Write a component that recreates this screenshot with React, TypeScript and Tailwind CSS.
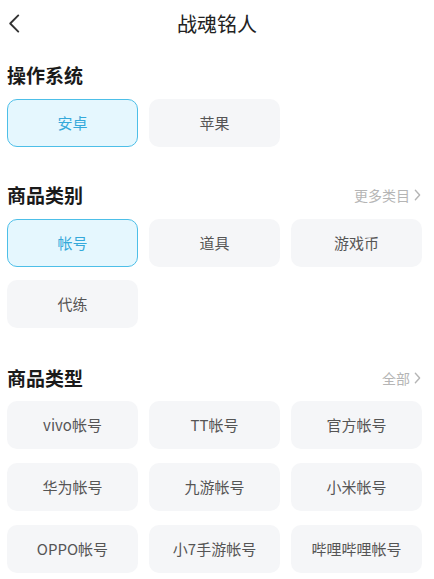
import React from "react";

const font = { fontFamily: '"Noto Sans CJK SC", "Noto Sans", sans-serif' };

function Chip({ label, active }: { label: string; active?: boolean }) {
  return (
    <div
      className={
        "h-[48px] rounded-[10px] flex items-center justify-center text-[15px] " +
        (active
          ? "bg-[#e5f7fe] border-[1.5px] border-[#4dbfe8] text-[#35a9da]"
          : "bg-[#f5f6f8] text-[#555555]")
      }
    >
      {label}
    </div>
  );
}

function Chevron({ className }: { className?: string }) {
  return (
    <svg viewBox="0 0 8 14" className={className} fill="none" stroke="currentColor" strokeWidth="1.6" strokeLinecap="round" strokeLinejoin="round">
      <path d="M1.5 1.5 L6.5 7 L1.5 12.5" />
    </svg>
  );
}

function Title({ text, more }: { text: string; more?: string }) {
  return (
    <div className="h-[24px] flex items-center justify-between pr-[13px]">
      <div className="text-[19px] font-bold text-[#1a1a1a] leading-[24px]">{text}</div>
      {more && (
        <div className="flex items-center gap-[4px] text-[14px] text-[#b5b5b5]">
          <span>{more}</span>
          <Chevron className="w-[7px] h-[12px]" />
        </div>
      )}
    </div>
  );
}

export default function App() {
  return (
    <div className="w-[434px] h-[579px] bg-white overflow-hidden" style={font}>
      <div className="relative h-[48px] flex items-center justify-center">
        <svg viewBox="0 0 12 20" className="absolute left-[8px] top-[14px] w-[12px] h-[19px]" fill="none" stroke="#333333" strokeWidth="2" strokeLinecap="round" strokeLinejoin="round">
          <path d="M10.5 1.5 L2 10 L10.5 18.5" />
        </svg>
        <div className="text-[20px] text-[#222222]">战魂铭人</div>
      </div>

      <div className="pl-[7px]">
        <div className="mt-[15px]">
          <Title text="操作系统" />
        </div>
        <div className="mt-[12px] grid grid-cols-[131px_131px_131px] gap-x-[11px]">
          <Chip label="安卓" active />
          <Chip label="苹果" />
        </div>

        <div className="mt-[36px]">
          <Title text="商品类别" more="更多类目" />
        </div>
        <div className="mt-[12px] grid grid-cols-[131px_131px_131px] gap-x-[11px] gap-y-[13px]">
          <Chip label="帐号" active />
          <Chip label="道具" />
          <Chip label="游戏币" />
          <Chip label="代练" />
        </div>

        <div className="mt-[38px]">
          <Title text="商品类型" more="全部" />
        </div>
        <div className="mt-[11px] grid grid-cols-[131px_131px_131px] gap-x-[11px] gap-y-[14px]">
          <Chip label="vivo帐号" />
          <Chip label="TT帐号" />
          <Chip label="官方帐号" />
          <Chip label="华为帐号" />
          <Chip label="九游帐号" />
          <Chip label="小米帐号" />
          <Chip label="OPPO帐号" />
          <Chip label="小7手游帐号" />
          <Chip label="哔哩哔哩帐号" />
        </div>
      </div>
    </div>
  );
}
